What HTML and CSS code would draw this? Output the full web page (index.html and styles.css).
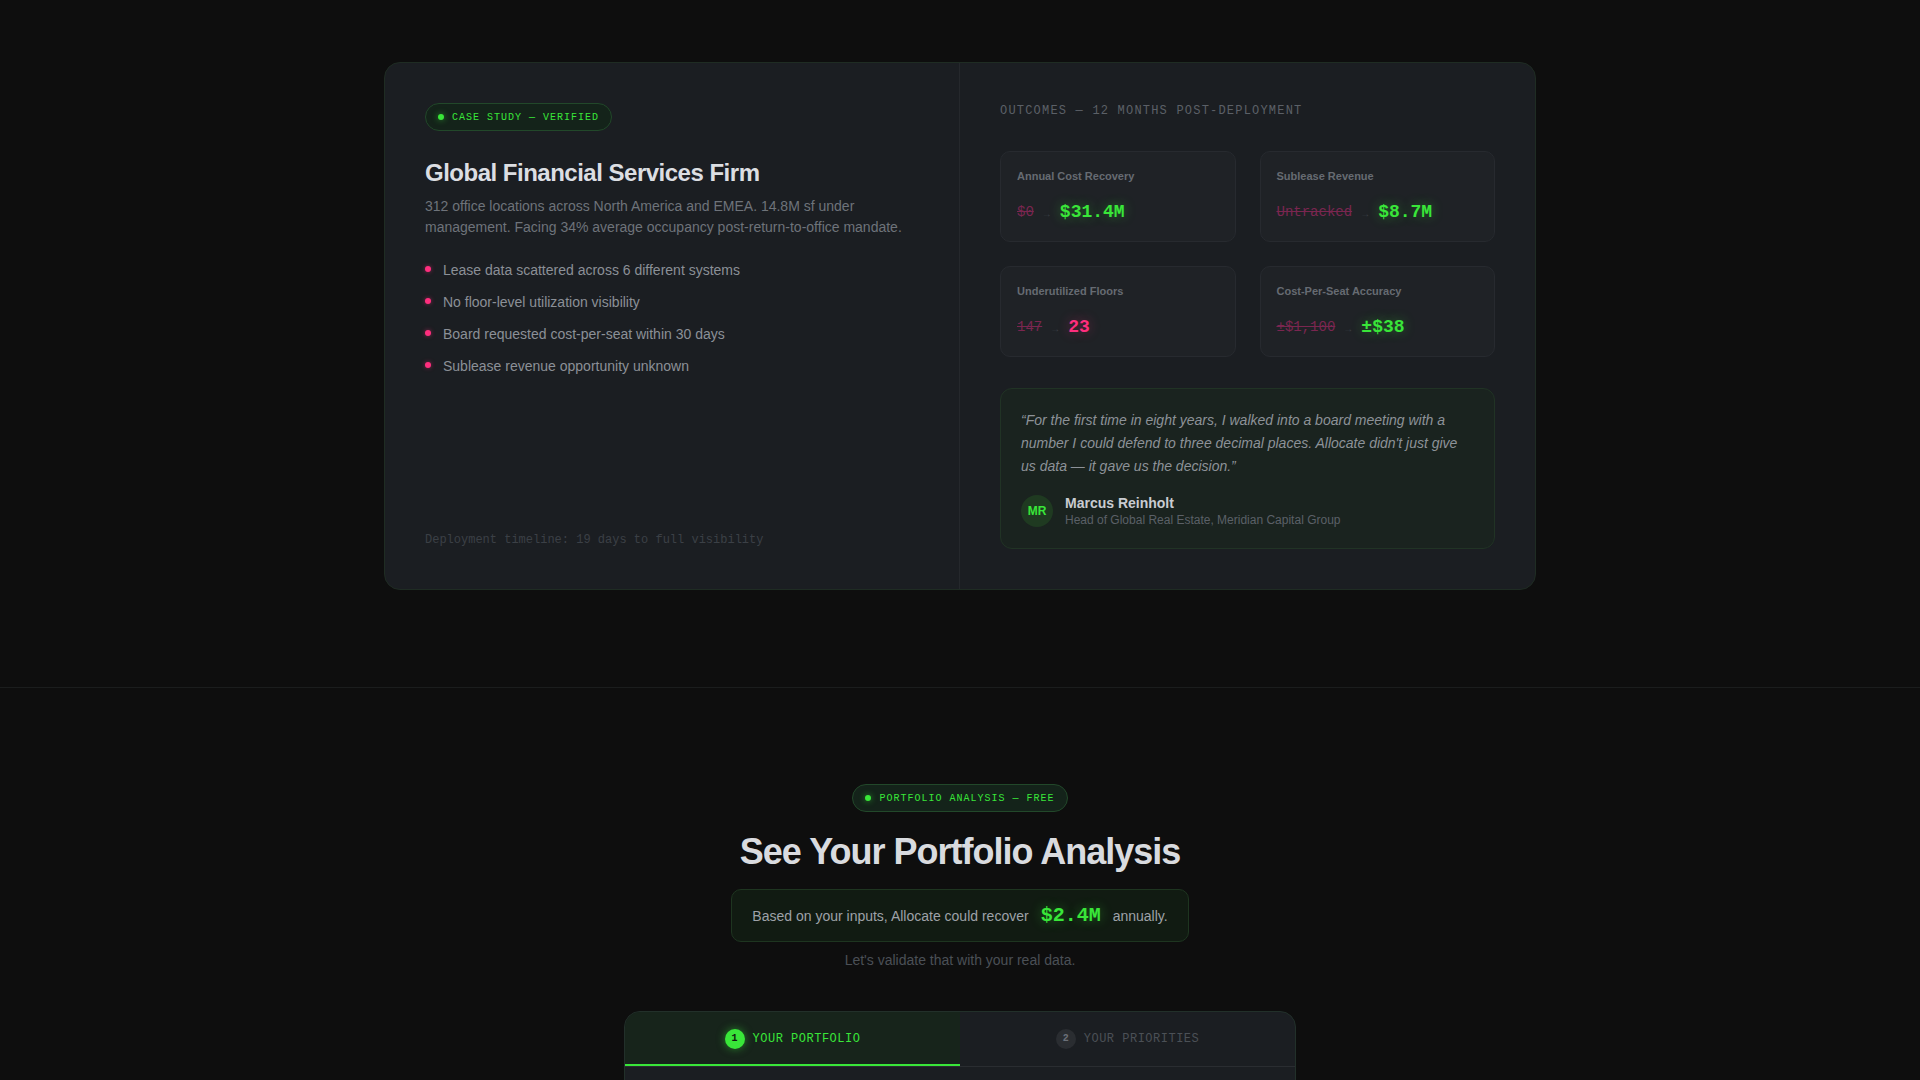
FILE: index.html
```html
<!DOCTYPE html>
<html lang="en">
<head>
<meta charset="utf-8">
<title>Case Study</title>
<link rel="stylesheet" href="styles.css">
</head>
<body>
<section class="case">
  <div class="case-card">
    <div class="case-left">
      <span class="badge"><span class="badge-dot"></span>CASE STUDY — VERIFIED</span>
      <h2 class="case-title">Global Financial Services Firm</h2>
      <p class="case-desc">312 office locations across North America and EMEA. 14.8M sf under management. Facing 34% average occupancy post-return-to-office mandate.</p>
      <ul class="pain-list">
        <li>Lease data scattered across 6 different systems</li>
        <li>No floor-level utilization visibility</li>
        <li>Board requested cost-per-seat within 30 days</li>
        <li>Sublease revenue opportunity unknown</li>
      </ul>
      <p class="timeline">Deployment timeline: 19 days to full visibility</p>
    </div>
    <div class="case-right">
      <div class="outcomes-label">OUTCOMES — 12 MONTHS POST-DEPLOYMENT</div>
      <div class="stats">
        <div class="stat">
          <div class="stat-label">Annual Cost Recovery</div>
          <div class="stat-values"><span class="old">$0</span><span class="arrow">→</span><span class="new">$31.4M</span></div>
        </div>
        <div class="stat">
          <div class="stat-label">Sublease Revenue</div>
          <div class="stat-values"><span class="old">Untracked</span><span class="arrow">→</span><span class="new">$8.7M</span></div>
        </div>
        <div class="stat">
          <div class="stat-label">Underutilized Floors</div>
          <div class="stat-values"><span class="old">147</span><span class="arrow">→</span><span class="new new-pink">23</span></div>
        </div>
        <div class="stat">
          <div class="stat-label">Cost-Per-Seat Accuracy</div>
          <div class="stat-values"><span class="old">±$1,100</span><span class="arrow">→</span><span class="new">±$38</span></div>
        </div>
      </div>
      <figure class="quote">
        <blockquote class="quote-text">“For the first time in eight years, I walked into a board meeting with a number I could defend to three decimal places. Allocate didn't just give us data — it gave us the decision.”</blockquote>
        <figcaption class="author">
          <span class="avatar">MR</span>
          <span class="author-info">
            <span class="author-name">Marcus Reinholt</span>
            <span class="author-role">Head of Global Real Estate, Meridian Capital Group</span>
          </span>
        </figcaption>
      </figure>
    </div>
  </div>
</section>

<section class="analysis">
  <span class="badge"><span class="badge-dot"></span>PORTFOLIO ANALYSIS — FREE</span>
  <h2 class="analysis-title">See Your Portfolio Analysis</h2>
  <div class="recovery">
    <span>Based on your inputs, Allocate could recover</span>
    <span class="recovery-value">$2.4M</span>
    <span>annually.</span>
  </div>
  <p class="validate">Let's validate that with your real data.</p>
  <div class="wizard">
    <div class="tabs">
      <div class="tab tab-active"><span class="step">1</span>YOUR PORTFOLIO</div>
      <div class="tab"><span class="step">2</span>YOUR PRIORITIES</div>
    </div>
    <div class="wizard-body"></div>
  </div>
</section>
</body>
</html>
```
FILE: styles.css
```css
* { box-sizing: border-box; }

html, body {
  margin: 0;
  padding: 0;
  background: #0e0e0e;
  color: #c9ccd1;
  font-family: "Liberation Sans", Arial, sans-serif;
}

/* ---------- Case study ---------- */
.case {
  padding: 62px 0 97px;
}

.case-card {
  width: 1152px;
  margin: 0 auto;
  display: grid;
  grid-template-columns: 1fr 1fr;
  background: #1b1e22;
  border: 1px solid #1f2c23;
  border-radius: 16px;
  overflow: hidden;
}

.case-left {
  padding: 40px;
  border-right: 1px solid #25282c;
  display: flex;
  flex-direction: column;
  align-items: flex-start;
}

.badge {
  display: inline-flex;
  align-items: center;
  gap: 8px;
  height: 28px;
  padding: 0 12px;
  border-radius: 999px;
  background: #14231a;
  border: 1px solid #22482a;
  color: #39e639;
  font-family: "Liberation Mono", monospace;
  font-size: 10px;
  letter-spacing: 1px;
  white-space: nowrap;
}

.badge-dot {
  width: 6px;
  height: 6px;
  border-radius: 50%;
  background: #39e639;
  box-shadow: 0 0 6px rgba(57, 230, 57, 0.6);
}

.case-title {
  margin: 28px 0 8px;
  font-size: 24px;
  line-height: 1.2;
  font-weight: 700;
  color: #dcdee2;
  letter-spacing: -0.5px;
}

.case-desc {
  margin: 0;
  font-size: 14px;
  line-height: 21px;
  color: #6e737a;
}

.pain-list {
  list-style: none;
  margin: 22px 0 0;
  padding: 0;
  display: flex;
  flex-direction: column;
  gap: 11px;
}

.pain-list li {
  display: flex;
  align-items: center;
  gap: 12px;
  font-size: 14px;
  line-height: 21px;
  color: #8b9097;
}

.pain-list li::before {
  content: "";
  width: 6px;
  height: 6px;
  border-radius: 50%;
  background: #ff2e7e;
  flex: none;
  margin-top: -3px;
  box-shadow: 0 0 4px rgba(255, 46, 126, 0.5);
}

.timeline {
  margin: auto 0 0;
  font-family: "Liberation Mono", monospace;
  font-size: 12px;
  line-height: 18px;
  color: #3b4046;
}

/* right column */
.case-right {
  padding: 40px;
  display: flex;
  flex-direction: column;
}

.outcomes-label {
  font-family: "Liberation Mono", monospace;
  font-size: 12px;
  line-height: 16px;
  letter-spacing: 1.2px;
  color: #5b6067;
  margin-bottom: 32px;
}

.stats {
  display: grid;
  grid-template-columns: 1fr 1fr;
  gap: 24px;
}

.stat {
  background: #1f2226;
  border: 1px solid #272a2f;
  border-radius: 10px;
  padding: 16px;
}

.stat-label {
  font-size: 11px;
  line-height: 16px;
  font-weight: 700;
  color: #666b72;
  margin-bottom: 14px;
}

.stat-values {
  display: flex;
  align-items: center;
  gap: 10px;
  height: 27px;
  font-family: "Liberation Mono", monospace;
}

.old {
  font-size: 14px;
  color: #7a2650;
  text-decoration: line-through;
}

.arrow {
  font-size: 10px;
  color: #3a3e44;
  margin-top: 6px;
}

.new {
  font-size: 18px;
  font-weight: 700;
  color: #39e639;
  text-shadow: 0 0 12px rgba(57, 230, 57, 0.4);
}

.new-pink {
  color: #ff2e7e;
  text-shadow: 0 0 12px rgba(255, 46, 126, 0.4);
}

.quote {
  margin: 31px 0 0;
  padding: 20px;
  background: #1a231f;
  border: 1px solid #213325;
  border-radius: 12px;
}

.quote-text {
  margin: 0 0 16px;
  font-size: 14px;
  line-height: 23px;
  font-style: italic;
  color: #8d9298;
}

.author {
  display: flex;
  align-items: center;
  gap: 12px;
}

.avatar {
  width: 32px;
  height: 32px;
  border-radius: 50%;
  background: #1f3a21;
  color: #39e639;
  font-size: 12px;
  font-weight: 700;
  display: flex;
  align-items: center;
  justify-content: center;
  flex: none;
}

.author-info {
  display: flex;
  flex-direction: column;
}

.author-name {
  font-size: 14px;
  line-height: 18px;
  font-weight: 700;
  color: #c9ccd1;
}

.author-role {
  font-size: 12px;
  line-height: 16px;
  color: #5b6067;
}

/* ---------- Analysis ---------- */
.analysis {
  border-top: 1px solid #1b1d1d;
  padding-top: 96px;
  display: flex;
  flex-direction: column;
  align-items: center;
  text-align: center;
}

.analysis-title {
  margin: 18px 0 16px;
  font-size: 36px;
  line-height: 1.2;
  font-weight: 700;
  color: #d9dbdf;
  letter-spacing: -1px;
}

.recovery {
  display: flex;
  align-items: center;
  gap: 12px;
  height: 53px;
  padding: 0 20px;
  background: #111b12;
  border: 1px solid #1e3520;
  border-radius: 10px;
  font-size: 14px;
  color: #9ea2a8;
}

.recovery-value {
  font-family: "Liberation Mono", monospace;
  font-size: 20px;
  font-weight: 700;
  color: #39e639;
  text-shadow: 0 0 12px rgba(57, 230, 57, 0.4);
}

.validate {
  margin: 8px 0 0;
  font-size: 14px;
  line-height: 21px;
  color: #4b5056;
}

.wizard {
  margin-top: 40px;
  width: 672px;
  background: #1b1e22;
  border: 1px solid #22302a;
  border-radius: 16px;
  overflow: hidden;
}

.tabs {
  display: grid;
  grid-template-columns: 1fr 1fr;
  border-bottom: 1px solid #2a2d31;
}

.tab {
  height: 54px;
  display: flex;
  align-items: center;
  justify-content: center;
  gap: 8px;
  border-bottom: 2px solid transparent;
  padding-top: 1px;
  font-family: "Liberation Mono", monospace;
  font-size: 12px;
  letter-spacing: 0.5px;
  color: #4b5056;
}

.tab-active {
  background: #17241b;
  border-bottom-color: #39e639;
  color: #39e639;
}

.step {
  width: 20px;
  height: 20px;
  border-radius: 50%;
  background: #2a2d31;
  color: #6b7078;
  font-size: 10px;
  font-weight: 700;
  letter-spacing: 0;
  display: flex;
  align-items: center;
  justify-content: center;
}

.tab-active .step {
  background: #39e639;
  color: #0e1a0e;
  box-shadow: 0 0 8px rgba(57, 230, 57, 0.5);
}

.wizard-body {
  height: 320px;
}
```
